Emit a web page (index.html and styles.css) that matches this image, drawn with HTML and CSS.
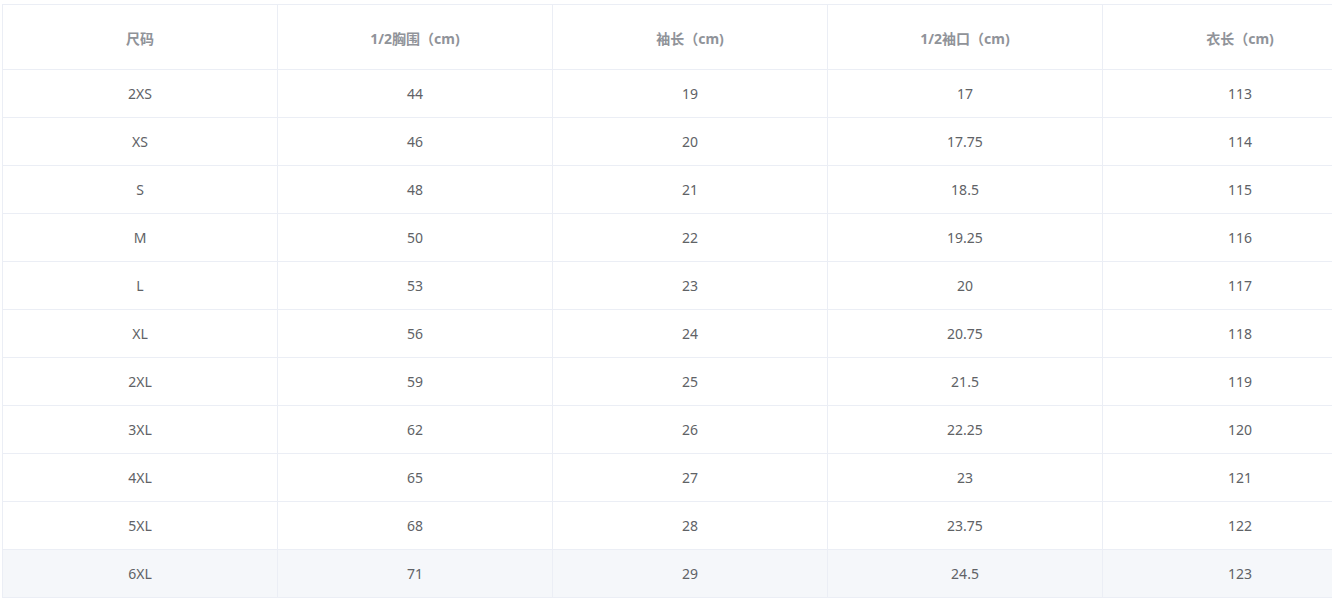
FILE: index.html
```html
<!DOCTYPE html>
<html lang="zh-CN">
<head>
<meta charset="utf-8">
<title>尺码表</title>
<link rel="stylesheet" href="styles.css">
</head>
<body>
<div class="wrap">
<table class="size-table">
<thead>
<tr><th>尺码</th><th>1/2胸围（cm)</th><th>袖长（cm)</th><th>1/2袖口（cm)</th><th>衣长（cm)</th></tr>
</thead>
<tbody>
<tr><td>2XS</td><td>44</td><td>19</td><td>17</td><td>113</td></tr>
<tr><td>XS</td><td>46</td><td>20</td><td>17.75</td><td>114</td></tr>
<tr><td>S</td><td>48</td><td>21</td><td>18.5</td><td>115</td></tr>
<tr><td>M</td><td>50</td><td>22</td><td>19.25</td><td>116</td></tr>
<tr><td>L</td><td>53</td><td>23</td><td>20</td><td>117</td></tr>
<tr><td>XL</td><td>56</td><td>24</td><td>20.75</td><td>118</td></tr>
<tr><td>2XL</td><td>59</td><td>25</td><td>21.5</td><td>119</td></tr>
<tr><td>3XL</td><td>62</td><td>26</td><td>22.25</td><td>120</td></tr>
<tr><td>4XL</td><td>65</td><td>27</td><td>23</td><td>121</td></tr>
<tr><td>5XL</td><td>68</td><td>28</td><td>23.75</td><td>122</td></tr>
<tr class="hover"><td>6XL</td><td>71</td><td>29</td><td>24.5</td><td>123</td></tr>
</tbody>
</table>
</div>
</body>
</html>
```

FILE: styles.css
```css
html, body {
  margin: 0;
  padding: 0;
  background: #ffffff;
}
.wrap {
  padding: 4px 0 0 2px;
  overflow: hidden;
}
.size-table {
  border-collapse: collapse;
  table-layout: fixed;
  width: 1376px;
  font-family: "Noto Sans", "Noto Sans CJK SC", sans-serif;
  font-size: 14px;
  color: #606266;
  border-top: 1px solid #ebeef5;
  border-left: 1px solid #ebeef5;
}
.size-table th,
.size-table td {
  width: 275px;
  text-align: center;
  border-right: 1px solid #ebeef5;
  border-bottom: 1px solid #ebeef5;
  padding: 0;
}
.size-table th {
  height: 65px;
  font-weight: bold;
  font-size: 14px;
  color: #909399;
  padding-top: 1px;
  box-sizing: border-box;
}
.size-table td {
  height: 47px;
}
.size-table tr.hover td {
  background: #f5f7fa;
}
```
